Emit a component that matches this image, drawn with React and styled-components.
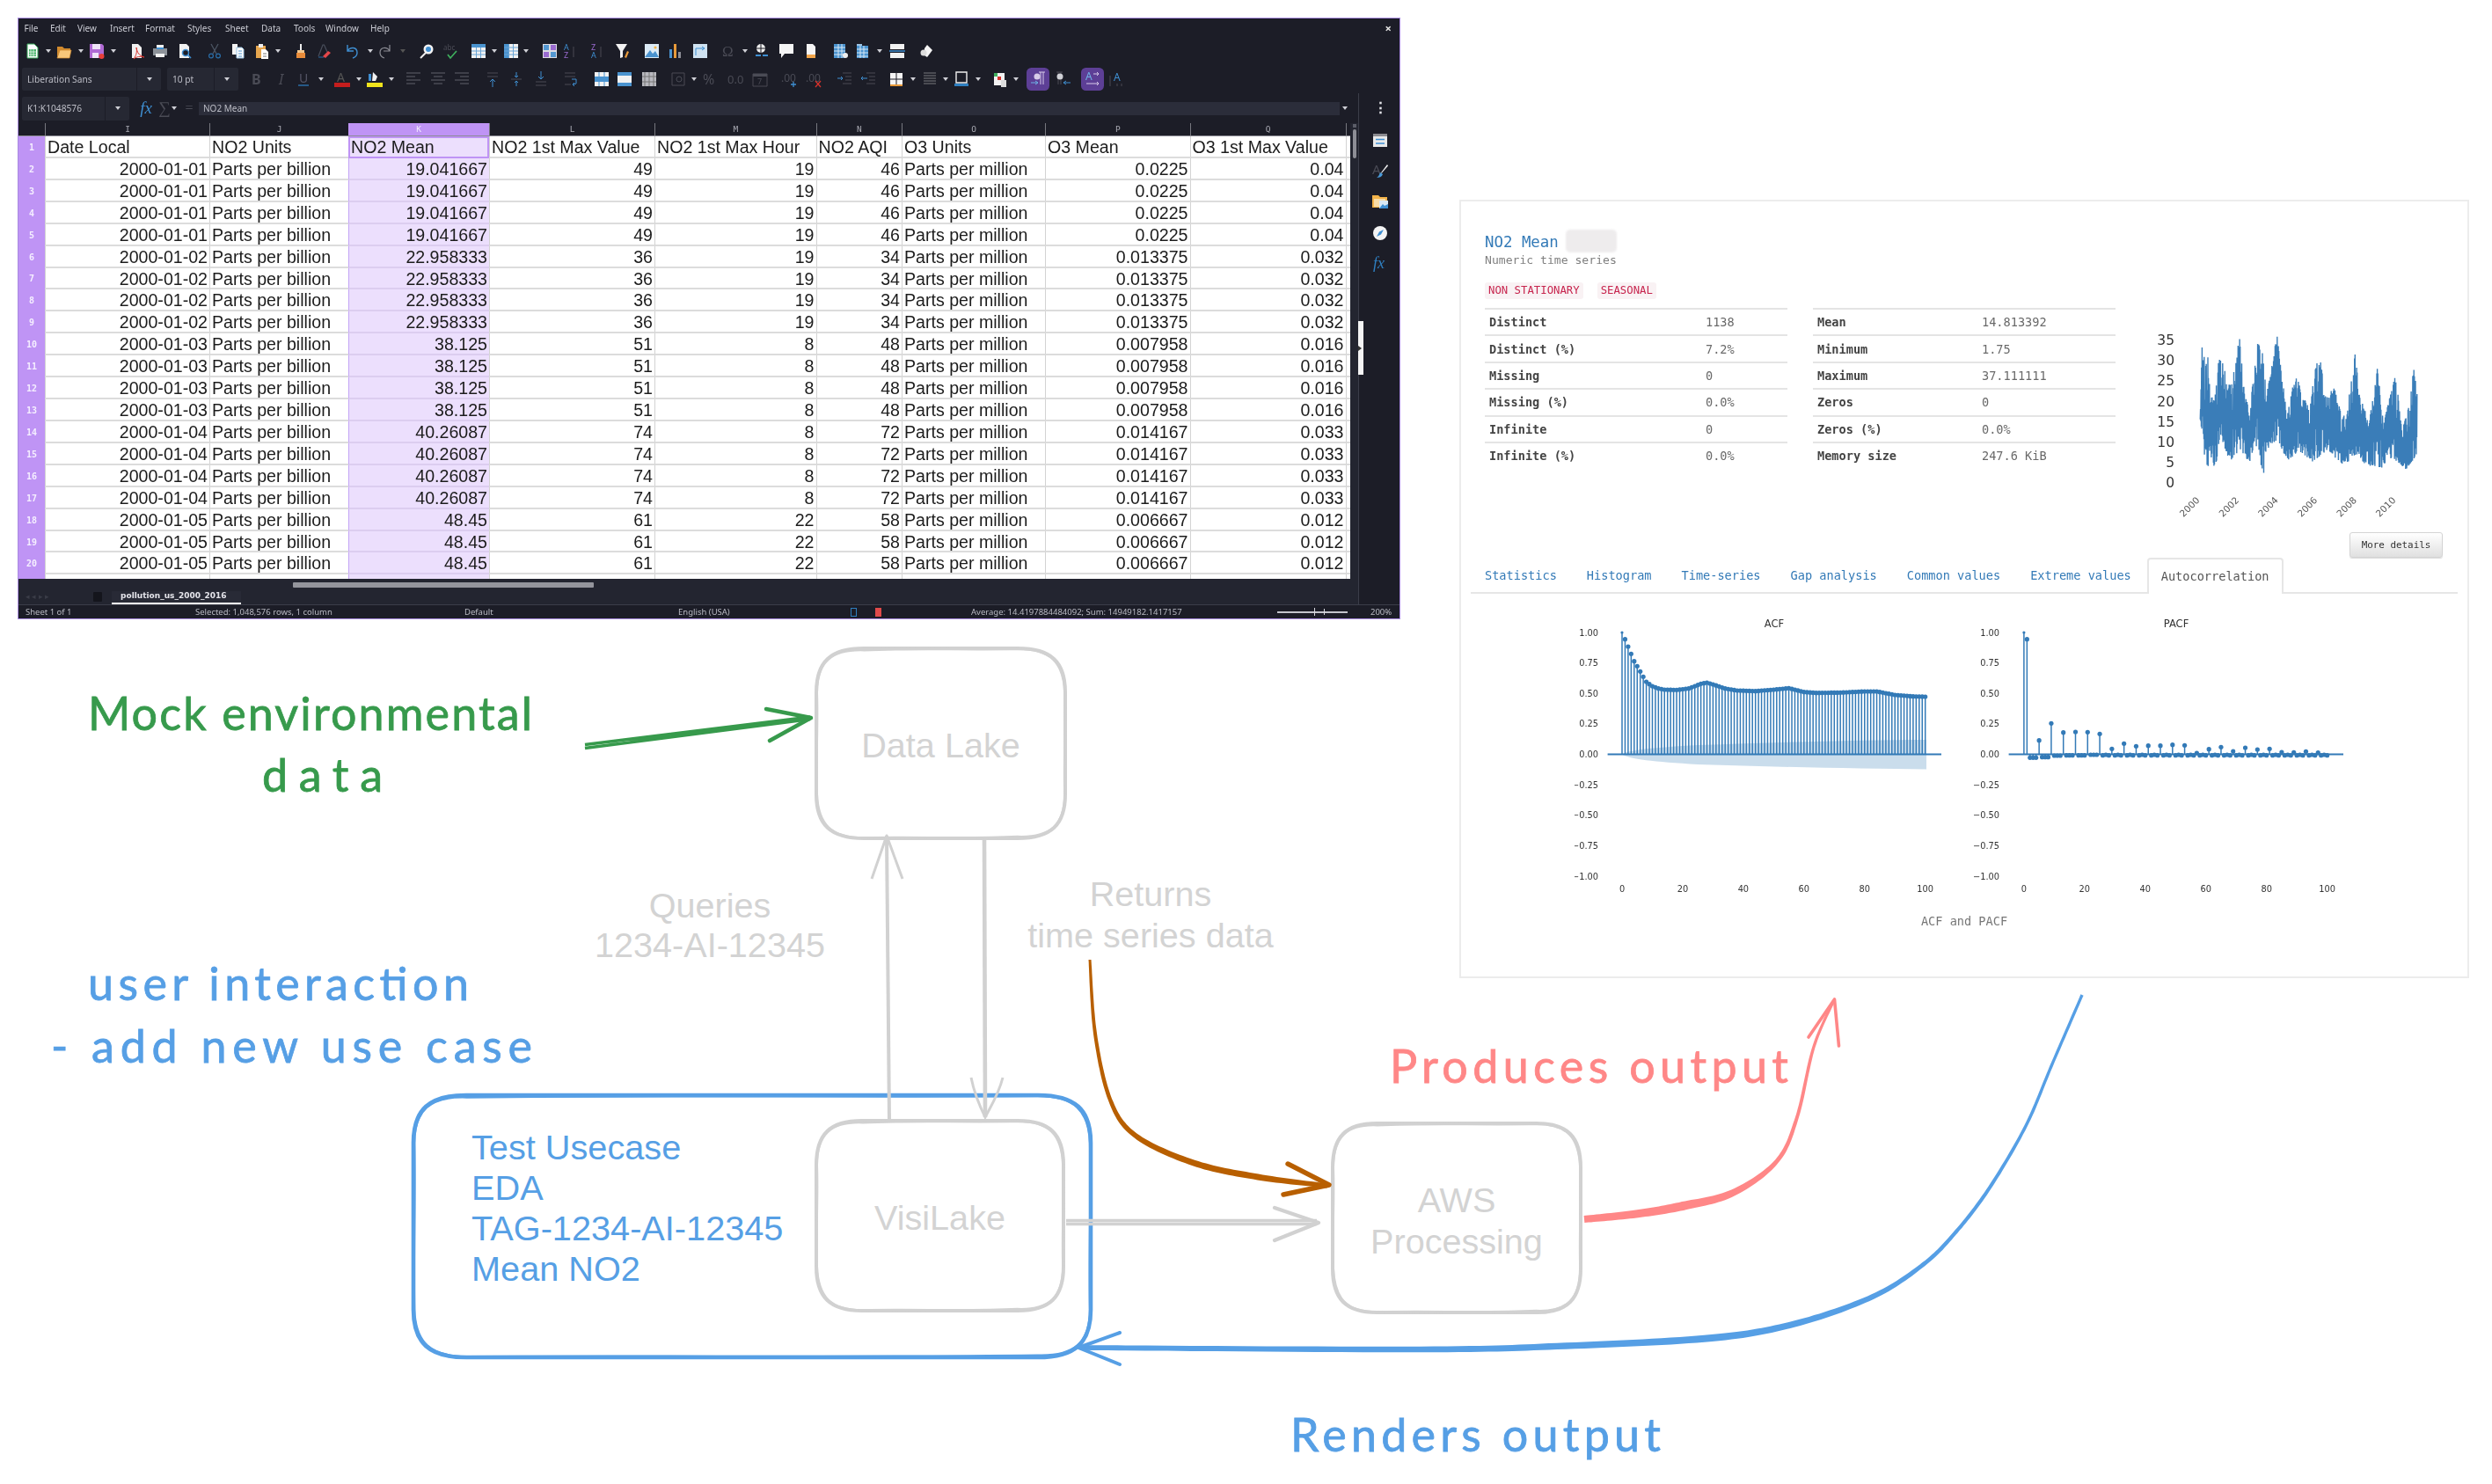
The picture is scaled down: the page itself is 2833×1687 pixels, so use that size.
import React from "react";
import styled, { createGlobalStyle } from "styled-components";

const GlobalStyle = createGlobalStyle`
  html, body { margin: 0; padding: 0; background: #fff; }
`;

const Canvas = styled.div`
  position: relative;
  width: 2833px;
  height: 1687px;
  overflow: hidden;
  background: #fff;
  font-family: "Liberation Sans", Arial, sans-serif;
`;

/* ---------- spreadsheet window ---------- */

const SheetWindow = styled.section`
  position: absolute;
  left: 20px;
  top: 20px;
  width: 1572px;
  height: 684px;
  box-sizing: border-box;
  border: 1px solid #a98be0;
  background: #1c1d27;
  display: flex;
  flex-direction: column;
  color: #c9cad2;
  font-family: "Noto Sans", sans-serif;
  filter: blur(0.3px);
`;
const MenuBar = styled.nav`
  height: 21px;
  flex: none;
  display: flex;
  align-items: center;
  padding-left: 6.5px;
  font-size: 10px;
  position: relative;
`;
const MenuItem = styled.span`
  flex: none;
  width: ${p => p.$w}px;
`;
const CloseMark = styled.span`
  position: absolute;
  right: 9px;
  top: 2px;
  font-size: 13px;
  font-weight: 700;
  color: #e6e6e6;
`;
const ToolRow = styled.div`
  flex: none;
  height: ${p => p.$h}px;
  display: flex;
  align-items: center;
`;
const Slot = styled.span`
  flex: none;
  display: flex;
  align-items: center;
  justify-content: center;
  margin-left: ${p => p.$gap}px;
  width: ${p => (p.$drop ? 6 : 18)}px;
  height: 18px;
`;
const HiSlot = styled(Slot)`
  background: #5d3f96;
  border-radius: 2px;
  box-shadow: 0 0 0 4px #5d3f96;
`;
const Arrow = styled.i`
  width: 0;
  height: 0;
  border-left: 3px solid transparent;
  border-right: 3px solid transparent;
  border-top: 4px solid ${p => (p.$dim ? "#555" : "#cfd0d6")};
`;
const Combo = styled.div`
  flex: none;
  width: ${p => p.$w}px;
  height: ${p => p.$h || 26}px;
  margin-left: ${p => p.$gap}px;
  background: #262833;
  border-radius: 2px;
  display: flex;
  align-items: center;
  font-size: 10.2px;
  color: #bcbdc6;
`;
const ComboText = styled.span`
  flex: 1;
  padding-left: 6px;
  white-space: nowrap;
`;
const ComboDrop = styled.span`
  flex: none;
  width: ${p => p.$w}px;
  height: 100%;
  border-left: 1px solid #1c1d27;
  display: flex;
  align-items: center;
  justify-content: center;
`;
const MainArea = styled.div`
  flex: none;
  height: 581px;
  display: flex;
`;
const SheetColumn = styled.div`
  flex: none;
  width: 1523px;
  display: flex;
  flex-direction: column;
`;
const FormulaRow = styled.div`
  flex: none;
  height: 34px;
  display: flex;
  align-items: center;
`;
const FxMark = styled.span`
  margin-left: ${p => p.$gap}px;
  color: ${p => p.$color};
  font-family: "Liberation Serif", serif;
  font-style: ${p => (p.$italic ? "italic" : "normal")};
  font-size: ${p => p.$size || 16}px;
  width: ${p => p.$w}px;
  text-align: center;
`;
const FormulaInput = styled.div`
  flex: none;
  width: 1297px;
  height: 15px;
  margin-left: 4px;
  background: #2b2d3a;
  font-size: 10px;
  line-height: 15px;
  padding-left: 5px;
  box-sizing: border-box;
  color: #bcbdc6;
`;
const ColumnHeads = styled.div`
  flex: none;
  height: 14px;
  display: grid;
  grid-template-columns: ${p => p.$cols};
`;
const ColumnHead = styled.div`
  font-family: "DejaVu Sans Mono", monospace;
  font-size: 9.5px;
  line-height: 14px;
  text-align: center;
  color: ${p => (p.$sel ? "#f3ecff" : "#a8a9b2")};
  background: ${p => (p.$sel ? "#bf94f5" : "transparent")};
  border-left: ${p => (p.$none ? "none" : "1px solid #77787f")};
  box-sizing: border-box;
`;
const GridWrap = styled.div`
  flex: none;
  display: flex;
`;
const GridStack = styled.div`
  flex: none;
  width: 1514px;
`;
const ScrollTrack = styled.div`
  flex: none;
  width: 9px;
  height: 518px;
  margin-top: -14px;
  background: #232530;
  padding: 1px 2px 0 3px;
  box-sizing: border-box;
`;
const ScrollCap = styled.div`
  height: 4px;
  background: #5b5d68;
`;
const ScrollThumb = styled.div`
  height: 33px;
  margin-top: 2px;
  background: #8d8e96;
  border-radius: 2px;
`;
const Table = styled.div`
  height: 504px;
  overflow: hidden;
  background: #fff;
  border-top: 1px solid #8c8c94;
  box-sizing: border-box;
`;
const Row = styled.div`
  display: grid;
  grid-template-columns: ${p => p.$cols};
  height: ${p => p.$h}px;
`;
const RowHead = styled.div`
  background: #bf94f5;
  color: #f5efff;
  font-family: "DejaVu Sans Mono", monospace;
  font-weight: 700;
  font-size: 10px;
  display: flex;
  align-items: center;
  justify-content: center;
`;
const Cell = styled.div`
  box-sizing: border-box;
  font-family: "Liberation Sans", Arial, sans-serif;
  font-size: 19.6px;
  line-height: 23px;
  color: #1c1c1c;
  padding: 1px 2px 0;
  text-align: ${p => (p.$num ? "right" : "left")};
  white-space: nowrap;
  overflow: hidden;
  background: ${p => (p.$sel ? "#ecdffd" : "#fff")};
  border-left: 1px solid ${p => (p.$sel ? "#c4a5f5" : "#d3d3d3")};
  border-bottom: 2px solid ${p => (p.$sel ? "#dccdf0" : "#dcdcdc")};
`;
const ActiveCell = styled(Cell)`
  border: 2px solid #bf94f5;
  padding: 0 0 0 1px;
  line-height: 21px;
`;
const HScroll = styled.div`
  flex: none;
  height: 14px;
  background: #232530;
  display: flex;
  align-items: center;
`;
const HThumb = styled.div`
  width: 342px;
  height: 6px;
  margin-left: 312px;
  background: #94959c;
  border-radius: 1px;
`;
const TabRow = styled.div`
  flex: none;
  height: 15px;
  background: #232530;
  display: flex;
  align-items: stretch;
`;
const TabNav = styled.span`
  width: 85px;
  font-size: 9px;
  color: #3a3c47;
  padding-left: 8px;
  box-sizing: border-box;
  line-height: 12px;
  white-space: nowrap;
`;
const AddSheet = styled.span`
  width: 10px;
  height: 11px;
  margin: 1px 11px 0 0;
  background: #14151c;
  border-radius: 1px;
`;
const SheetTab = styled.span`
  width: 147px;
  box-sizing: border-box;
  border-bottom: 2px solid #fff;
  font-family: "DejaVu Sans", sans-serif;
  font-weight: 700;
  font-size: 9px;
  line-height: 11px;
  padding-left: 10px;
  color: #e4e4ea;
  background: #282a36;
  white-space: nowrap;
`;
const Sidebar = styled.aside`
  flex: none;
  width: 47px;
  border-left: 1px solid #3b3d49;
  box-sizing: border-box;
  display: flex;
  flex-direction: column;
  align-items: center;
  padding-left: 2px;
`;
const SideDots = styled.div`
  height: 42px;
  margin-top: 2px;
  font-weight: 700;
  font-size: 17px;
  line-height: 28px;
  color: #e2e2e8;
`;
const SideIcon = styled.div`
  width: 20px;
  height: 20px;
  margin-bottom: ${p => p.$mb}px;
`;
const SideHandle = styled.div`
  position: absolute;
  left: 1523px;
  top: 344px;
  width: 6px;
  height: 61px;
  background: #f4f4f4;
  display: flex;
  align-items: center;
`;
const HandleMark = styled.i`
  width: 0;
  height: 0;
  border-top: 3px solid transparent;
  border-bottom: 3px solid transparent;
  border-left: 4px solid #333;
`;
const StatusBar = styled.footer`
  flex: none;
  height: 16px;
  border-top: 1px solid #3b3d49;
  box-sizing: border-box;
  display: flex;
  align-items: center;
  font-size: 9.5px;
  color: #b9bac3;
  position: relative;
`;
const StatusText = styled.span`
  position: absolute;
  left: ${p => p.$x}px;
  white-space: nowrap;
`;
const StatusMark = styled.span`
  position: absolute;
  left: ${p => p.$x}px;
  width: 5px;
  height: 8px;
  border: 1px solid ${p => p.$color};
  background: ${p => p.$fill};
`;
const ZoomTrack = styled.span`
  position: absolute;
  left: 1431px;
  width: 80px;
  height: 2px;
  background: #c4c5cc;
`;
const ZoomKnob = styled.span`
  position: absolute;
  left: ${p => p.$x}px;
  top: ${p => p.$top}px;
  width: 1px;
  height: ${p => p.$h}px;
  background: #d8d8de;
`;
const IconSvg = styled.svg`
  display: block;
  overflow: visible;
`;

/* ---------- profiling report panel ---------- */

const Report = styled.section`
  position: absolute;
  left: 1659px;
  top: 227px;
  width: 1148px;
  height: 885px;
  box-sizing: border-box;
  border: 2px solid #ececec;
  background: #fff;
  padding: 33px 11px 0 11px;
  font-family: "DejaVu Sans Mono", "Liberation Mono", monospace;
  font-size: 13.6px;
  color: #333;
  filter: blur(0.25px);
`;
const Overview = styled.div`
  display: flex;
  height: 343px;
`;
const Facts = styled.div`
  flex: none;
  width: 749px;
  padding-left: 16px;
  box-sizing: border-box;
`;
const TitleLine = styled.div`
  height: 25px;
  display: flex;
  align-items: center;
`;
const VarName = styled.span`
  font-size: 17.4px;
  color: #337ab7;
`;
const Redaction = styled.span`
  width: 58px;
  height: 26px;
  margin-left: 8px;
  margin-top: -2px;
  border-radius: 5px;
  background: #eeeced;
  filter: blur(1px);
`;
const VarType = styled.div`
  font-size: 13.1px;
  line-height: 18px;
  color: #808080;
`;
const Badges = styled.div`
  display: flex;
  gap: 16px;
  margin-top: 16px;
`;
const Badge = styled.code`
  font-family: inherit;
  font-size: 12.3px;
  line-height: 19px;
  padding: 0 4px;
  background: #f9f2f4;
  color: #c7254e;
  border-radius: 3px;
`;
const FactTables = styled.div`
  display: flex;
  gap: 29px;
  margin-top: 10px;
`;
const FactTable = styled.div`
  width: ${p => p.$w}px;
`;
const FactRow = styled.div`
  display: grid;
  grid-template-columns: ${p => p.$label}px 1fr;
  height: 30.4px;
  box-sizing: border-box;
  align-items: center;
  padding-left: 5px;
  border-top: 2px solid #e4e4e4;
`;
const FactLabel = styled.span`
  font-weight: 700;
  color: #444;
`;
const FactValue = styled.span`
  color: #6a6a6a;
`;
const TrendBox = styled.svg`
  flex: none;
  margin: 103px 0 0 20px;
  display: block;
`;
const ActionRow = styled.div`
  display: flex;
  justify-content: flex-end;
  padding-right: 17px;
  height: 29px;
`;
const MoreButton = styled.button`
  width: 106px;
  height: 29px;
  padding: 0;
  font-family: inherit;
  font-size: 10.9px;
  color: #333;
  border: 1px solid #d4d4d4;
  border-radius: 3px;
  background: linear-gradient(#fff, #e0e0e0);
  box-shadow: 0 1px 1px rgba(0, 0, 0, 0.15);
`;
const Tabs = styled.ul`
  list-style: none;
  margin: 0;
  padding: 0;
  height: 41px;
  box-sizing: border-box;
  display: flex;
  border-bottom: 2px solid #e6e6e6;
`;
const Tab = styled.li`
  box-sizing: border-box;
  height: ${p => (p.$active ? 41 : 39)}px;
  padding: 0 15px;
  margin-right: 2px;
  line-height: 38px;
  border: 1px solid transparent;
  color: #337ab7;
  ${p => p.$active && `
    color: #555;
    background: #fff;
    border: 2px solid #e6e6e6;
    border-bottom: 0;
    border-radius: 4px 4px 0 0;
    padding: 0 14px;
  `}
`;
const AcfBox = styled.svg`
  display: block;
  margin-left: 118px;
  margin-top: 20px;
`;
const Caption = styled.div`
  text-align: center;
  margin-top: 14px;
  color: #777;
`;

/* ---------- sketched diagram ---------- */

const Wires = styled.svg`
  position: absolute;
  left: 0;
  top: 0;
`;
const Scrawl = styled.text`
  font-family: Lato, "Noto Sans", sans-serif;
  font-size: 52px;
  fill: ${p => p.$color};
  stroke: ${p => p.$color};
  stroke-width: 0.8px;
`;
const BoxLabel = styled.div`
  position: absolute;
  left: ${p => p.$x}px;
  top: ${p => p.$y}px;
  width: ${p => p.$w}px;
  text-align: center;
  font-size: 39.6px;
  line-height: ${p => p.$lh || 46}px;
  color: #d3d3d3;
  white-space: nowrap;
`;
const UseCase = styled.div`
  position: absolute;
  left: 536px;
  top: 1281px;
  font-size: 39.7px;
  line-height: 46px;
  color: #569fe5;
  white-space: nowrap;
`;

/* ---------- icons ---------- */

const D = "#4a4b55";
const ICONS = {
  calc: <><path d="M3 1h8l4 4v12H3z" fill="#fff" stroke="#39a85a" /><path d="M5 7h8v8H5z" fill="#46b468" /><path d="M7 7v8M10 7v8M5 10h8M5 13h8" stroke="#fff" strokeWidth=".7" /></>,
  folder: <><path d="M1 4h6l2 2h7v2H5L1 16z" fill="#d18a2e" /><path d="M4 8h13l-2 9H1z" fill="#f7c77a" stroke="#d18a2e" strokeWidth=".7" /></>,
  save: <><path d="M1 1h14l2 2v14H1z" fill="#b06ad4" /><path d="M4 1h9v6H4z" fill="#efe3f7" /><path d="M4 11h7v6H4z" fill="#efe3f7" /><circle cx="14.5" cy="15" r="3" fill="#e8403a" /></>,
  pdf: <><path d="M3 1h7l4 4v12H3z" fill="#f1f1f1" /><path d="M8 5c1 6 3 9 9 11-5-1-8-1-12 2 3-4 4-8 3-13z" fill="none" stroke="#d6322c" /></>,
  print: <><path d="M5 2h8v5H5z" fill="#f2f2f2" /><path d="M1 6h16v8H1z" fill="#8d9299" /><path d="M5 5h8v2H5z" fill="#3f8fd2" /><path d="M4 12h10v4H4z" fill="#f2f2f2" /></>,
  preview: <><path d="M3 1h8l3 3v13H3z" fill="#f1f1f1" /><circle cx="10" cy="11" r="3.5" fill="#1c1d27" stroke="#3f8fd2" strokeWidth="1.5" /><path d="M12.5 13.5L16 17" stroke="#3f8fd2" strokeWidth="1.6" /></>,
  cut: <><path d="M5 1l6 11M13 1L7 12" stroke="#4b5563" strokeWidth="1.3" /><circle cx="5" cy="14.5" r="2.4" fill="none" stroke="#2a6ea8" strokeWidth="1.2" /><circle cx="13" cy="14.5" r="2.4" fill="none" stroke="#2a6ea8" strokeWidth="1.2" /></>,
  copy: <><path d="M3 1h6v12H3z" fill="#f3f3f3" /><path d="M8 5h6l2 2v10H8z" fill="#fff" stroke="#9cc4e4" /><path d="M10 9h4M10 12h4M10 15h4" stroke="#4a93cf" /></>,
  paste: <><path d="M2 3h11v14H2z" fill="#e6a64e" /><path d="M5 1h5v4H5z" fill="#eee" /><path d="M8 7h5l3 3v8H8z" fill="#fff" /><path d="M10 12h4M10 15h4" stroke="#777" /></>,
  brush: <><path d="M8 1h2v7H8z" fill="#eee" /><path d="M5 8h8v3H5z" fill="#f2c78e" /><path d="M4 11h10v6H4z" fill="#e98c3a" /></>,
  erase: <><path d="M3 15l5-13h1.5L13 10" fill="none" stroke="#4a4f5c" strokeWidth="1.2" /><path d="M3 16h6" stroke="#2a6ea8" /><path d="M8 15l6-6 3 2-6 6z" fill="#e4474a" /></>,
  undo: <path d="M4 2v7h7M4 9c3-5 11-5 11 2 0 3-2 5-5 6" fill="none" stroke="#3f8fd2" strokeWidth="1.4" />,
  redo: <path d="M14 2v7H7M14 9C11 4 3 4 3 11c0 3 2 5 5 6" fill="none" stroke="#8d8e96" strokeWidth="1.2" />,
  find: <><path d="M8 11L2 17" stroke="#eee" strokeWidth="2" /><circle cx="11" cy="7" r="5.5" fill="#f3f3f3" /><circle cx="11" cy="7" r="3" fill="#3f8fd2" /></>,
  spell: <><text x="1" y="8" fontSize="8" fill={D} fontFamily="Noto Sans">abc</text><path d="M6 13l3 4 7-8" fill="none" stroke="#3fb05e" strokeWidth="1.7" /></>,
  grid: <><path d="M1 1h16v16H1z" fill="#f2f2f2" /><path d="M1 1h16v4H1z" fill="#4a93cf" /><path d="M1 9h16M1 13h16M6.5 5v12M11.5 5v12" stroke="#6aa5d6" /></>,
  gridB: <><path d="M1 1h16v16H1z" fill="#f2f2f2" /><path d="M1 1h5v16H1z" fill="#4a93cf" /><path d="M1 5h16M1 9h16M1 13h16M6.5 1v16M11.5 1v16" stroke="#6aa5d6" /></>,
  sort: <><path d="M1 1h16v16H1z" fill="#dcdce2" /><path d="M2 2h6v6H2zM10 10h6v6h-6z" fill="#5397d1" /><path d="M10 2h6v6h-6zM2 10h6v6H2z" fill="#9a6bd0" /></>,
  az: <><text x="2" y="8" fontSize="9" fill="#3f8fd2" fontFamily="Noto Sans">A</text><text x="2" y="17" fontSize="9" fill="#9a6bd0" fontFamily="Noto Sans">Z</text><path d="M13 4v12" stroke={D} /></>,
  za: <><text x="2" y="8" fontSize="9" fill="#9a6bd0" fontFamily="Noto Sans">Z</text><text x="2" y="17" fontSize="9" fill="#3f8fd2" fontFamily="Noto Sans">A</text><path d="M13 4v12" stroke={D} /></>,
  filter: <><path d="M1 1h13L9 9v7L6 17V9z" fill="#f3f3f3" /><path d="M11 16l3-7 2 1-3 7z" fill="#e89a3a" /></>,
  image: <><path d="M1 1h16v16H1z" fill="#dcebf6" /><path d="M1 16l6-8 3 4 3-3 4 7z" fill="#4a93cf" /><circle cx="13" cy="5" r="1.6" fill="#f2b34a" /></>,
  chart: <><path d="M2 7h3v10H2z" fill="#4a93cf" /><path d="M7 1h3v16H7z" fill="#e89a3a" /><path d="M12 10h3v7h-3z" fill="#8d8e96" /></>,
  pivot: <><path d="M1 1h16v16H1z" fill="#cfe2f1" /><path d="M4 14V6h10M14 6l-3-2M14 6l-3 2" fill="none" stroke="#3f8fd2" /></>,
  omega: <text x="1" y="15" fontSize="17" fill={D} fontFamily="Liberation Serif">Ω</text>,
  link: <><circle cx="8" cy="6" r="5" fill="#eee" /><path d="M3 6h10M8 1v10" stroke="#1c1d27" /><path d="M2 14h6M10 14h6" stroke="#3f8fd2" strokeWidth="2" /></>,
  comment: <path d="M1 1h16v11H7l-4 5v-5H1z" fill="#f5f5f5" />,
  note: <><path d="M4 1h7l3 3v13H4z" fill="#f5f5f5" /><path d="M4 13h10v4H4z" fill="#f2a54a" /></>,
  hdrA: <><path d="M1 1h13v16H1z" fill="#4a93cf" /><path d="M1 5h13M1 9h13M1 13h13M6 1v16M10 1v16" stroke="#d6e7f4" /><circle cx="14" cy="14" r="3" fill="#eee" /></>,
  hdrB: <><path d="M2 3h13v14H2z" fill="#4a93cf" /><path d="M2 7h13M2 11h13M2 15h13M6 3v14M10 3v14" stroke="#d6e7f4" /><path d="M2 1h6v2H2z" fill="#9cc4e4" /></>,
  split: <><path d="M1 1h16v6H1zM1 11h16v6H1z" fill="#f2f2f2" /><path d="M0 9h18" stroke="#3f8fd2" strokeWidth="1.5" /></>,
  shapes: <><path d="M9 2l6 6-6 8-3-2V6z" fill="#f5f5f5" /><circle cx="5" cy="11" r="3.5" fill="#ddd" /></>,
  bold: <text x="3" y="15" fontSize="16" fontWeight="700" fill={D} fontFamily="Noto Sans">B</text>,
  ital: <text x="6" y="15" fontSize="16" fontStyle="italic" fill={D} fontFamily="Noto Sans">I</text>,
  under: <><text x="3" y="13" fontSize="14" fill="#556" fontFamily="Noto Sans">U</text><path d="M2 16h12" stroke="#2a6ea8" strokeWidth="1.5" /></>,
  color: <><text x="3" y="12" fontSize="14" fill="#555" fontFamily="Noto Sans">A</text><path d="M0 13h18v5H0z" fill="#c41d1d" /></>,
  high: <><path d="M7 1l5 5-2 5H6z" fill="#f2f2f2" /><path d="M2 3h3v8H2z" fill="#3f8fd2" /><path d="M0 13h18v5H0z" fill="#efe31c" /></>,
  alignL: <path d="M1 2h16M1 6h10M1 10h16M1 14h10" stroke={D} strokeWidth="1.3" />,
  alignC: <path d="M1 2h16M4 6h10M1 10h16M4 14h10" stroke={D} strokeWidth="1.3" />,
  alignR: <path d="M1 2h16M7 6h10M1 10h16M7 14h10" stroke={D} strokeWidth="1.3" />,
  valT: <><path d="M3 2h12M3 6h12" stroke={D} /><path d="M9 18V9M6 12l3-3 3 3" fill="none" stroke="#3f8fd2" /></>,
  valM: <><path d="M3 9h12" stroke={D} /><path d="M9 1v6M7 5l2 2 2-2M9 17v-6M7 13l2-2 2 2" fill="none" stroke="#3f8fd2" /></>,
  valB: <><path d="M3 12h12M3 16h12" stroke={D} /><path d="M9 0v9M6 6l3 3 3-3" fill="none" stroke="#3f8fd2" /></>,
  wrap: <><path d="M2 2h12M2 6h12M2 15h7" stroke={D} /><path d="M10 9h5v5l-3 1M13 13l-2 2 2 2" fill="none" stroke="#3f8fd2" /></>,
  merge: <><path d="M1 1h16v16H1z" fill="#f2f2f2" /><path d="M1 6h16v6H1z" fill="#4a93cf" /><path d="M6 1v5M12 1v5M6 12v5M12 12v5" stroke="#4a93cf" /></>,
  mergeB: <><path d="M1 1h16v16H1z" fill="#f2f2f2" /><path d="M1 1h16v4H1zM1 13h16v4H1z" fill="#4a93cf" /></>,
  mergeC: <><path d="M1 1h16v16H1z" fill="#b9b9bf" /><path d="M4 1v16M9 1v16M14 1v16M1 6h16M1 12h16" stroke="#777" /></>,
  cond: <><path d="M1 2h14v14H1z" fill="none" stroke={D} /><circle cx="9" cy="9" r="3" fill="none" stroke={D} /></>,
  pct: <text x="0" y="15" fontSize="16" fill={D} fontFamily="Noto Sans">%</text>,
  num: <text x="0" y="14" fontSize="13" fill={D} fontFamily="Noto Sans">0.0</text>,
  cal: <><path d="M1 3h16v14H1z" fill="none" stroke={D} /><path d="M1 3h16v3H1z" fill={D} /><text x="6" y="15" fontSize="9" fill={D}>7</text></>,
  decAdd: <><text x="0" y="12" fontSize="12" fill={D} fontFamily="Noto Sans">.00</text><path d="M11 15h6M14 12v6" stroke="#3f8fd2" strokeWidth="1.3" /></>,
  decDel: <><text x="0" y="12" fontSize="12" fill={D} fontFamily="Noto Sans">.00</text><path d="M11 11l6 7M17 11l-6 7" stroke="#d6322c" strokeWidth="1.3" /></>,
  indent: <><path d="M7 2h10M10 6h7M10 10h7M7 14h10" stroke={D} /><path d="M1 8h6M5 6l2 2-2 2" fill="none" stroke="#3f8fd2" /></>,
  outdent: <><path d="M7 2h10M10 6h7M10 10h7M7 14h10" stroke={D} /><path d="M8 8H1M3 6L1 8l2 2" fill="none" stroke="#3f8fd2" /></>,
  cellB: <><path d="M2 2h14v14H2z" fill="#f5f5f5" /><path d="M2 9h14M9 2v14" stroke="#1c1d27" /><path d="M2 15h14v2H2z" fill="#e89a3a" /></>,
  lines: <path d="M2 2h14M2 5h14M2 8h14M2 11h14M2 14h14" stroke="#5a5b62" strokeWidth="1.4" />,
  frame: <><path d="M3 1h12v12H3z" fill="none" stroke="#eee" strokeWidth="1.4" /><path d="M1 14h16v3H1z" fill="#2f7fc0" /></>,
  style: <><path d="M2 2h12v14H2z" fill="#f2f2f2" /><path d="M2 2h4v4H2z" fill="#3fb05e" /><path d="M6 6h4v4H6z" fill="#d6322c" /><path d="M10 10h6v8h-6z" fill="#ddd" /></>,
  paraL: <><path d="M10 1h7M12 1v14M15 1v14" stroke="#d8cbe9" /><circle cx="8" cy="6" r="3.5" fill="#d8cbe9" /><path d="M1 13h8M6 11l3 2-3 2" fill="none" stroke="#6fb2e6" /></>,
  paraR: <><path d="M1 1h7M3 1v14M6 1v14" stroke={D} /><circle cx="5" cy="6" r="3.5" fill="#cfd0d6" /><path d="M17 13H9M12 11l-3 2 3 2" fill="none" stroke="#3f8fd2" /></>,
  textH: <><text x="1" y="10" fontSize="12" fill="#6fb2e6" fontFamily="Noto Sans">A</text><path d="M10 3h6M14 1l2 2-2 2M2 14h14M14 12l2 2-2 2" fill="none" stroke="#d8cbe9" /></>,
  textV: <><text x="6" y="11" fontSize="12" fill="#3f8fd2" fontFamily="Noto Sans">A</text><path d="M2 5v12M10 14v3M15 14v3" stroke={D} /></>,
  props: <><path d="M2 2h16v15H2z" fill="#e9e9e9" /><path d="M2 2h16v3H2z" fill="#8a8a90" /><path d="M5 8.5h10M5 13h10" stroke="#3f8fd2" strokeWidth="1.5" /></>,
  styles: <><text x="1" y="14" fontSize="15" fill={D} fontFamily="Noto Sans">A</text><path d="M18 3l1 1.5-7 8-1.5.5z" fill="#f0f0f0" /><path d="M10 12l3 2c-1 3-4 4-7 4 2-1 3-3 4-6z" fill="#4a9ad8" /></>,
  gallery: <><path d="M1 3h7l2 2h8v12H1z" fill="#f2b34a" /><path d="M3 7h13v9H3z" fill="#f7dca8" /><path d="M9 9h10v9H9z" fill="#d9e8f4" /><path d="M9 18l4-5 2 2 4-2v5z" fill="#3f8fd2" /></>,
  nav: <><circle cx="10" cy="10" r="8" fill="#f4f4f4" /><path d="M14 6l-5 2.5L6 14l5-2.5z" fill="#3f8fd2" /></>,
  fx: <text x="2" y="16" fontSize="18" fontStyle="italic" fill="#2f7fc0" fontFamily="Liberation Serif">fx</text>,
};

const Icon = ({ k, size = 18 }) => (
  <IconSvg width={size} height={size} viewBox={size === 20 ? "0 0 20 20" : "0 0 18 18"}>
    {ICONS[k]}
  </IconSvg>
);

const BAR_ONE = [
  [37, "calc"], [55, "drop"], [73, "folder"], [92, "drop"], [110, "save"], [129, "drop"],
  [156, "pdf"], [182, "print"], [210, "preview"], [244, "cut"], [270, "copy"], [298, "paste"],
  [316, "drop"], [342, "brush"], [368, "erase"], [400, "undo"], [421, "drop"], [438, "redo"],
  [458, "dimdrop"], [485, "find"], [512, "spell"], [544, "grid"], [562, "drop"], [581, "gridB"],
  [598, "drop"], [625, "sort"], [648, "az"], [679, "za"], [708, "filter"], [741, "image"],
  [768, "chart"], [796, "pivot"], [829, "omega"], [847, "drop"], [866, "link"], [894, "comment"],
  [922, "note"], [956, "hdrA"], [981, "hdrB"], [1000, "drop"], [1020, "split"], [1054, "shapes"],
];

const BAR_TWO = [
  [292, "bold"], [320, "ital"], [346, "under"], [365, "drop"], [389, "color"], [408, "drop"],
  [426, "high"], [445, "drop"], [470, "alignL"], [498, "alignC"], [525, "alignR"], [560, "valT"],
  [587, "valM"], [615, "valB"], [649, "wrap"], [684, "merge"], [710, "mergeB"], [738, "mergeC"],
  [772, "cond"], [789, "drop"], [808, "pct"], [836, "num"], [864, "cal"], [897, "decAdd"],
  [925, "decDel"], [960, "indent"], [987, "outdent"], [1019, "cellB"], [1038, "drop"], [1057, "lines"],
  [1075, "drop"], [1093, "frame"], [1112, "drop"], [1137, "style"], [1155, "drop"], [1180, "paraL", true],
  [1209, "paraR"], [1242, "textH", true], [1269, "textV"],
];

const Tools = ({ items, from }) => {
  let prev = from;
  return items.map(([x, k, hi]) => {
    const drop = k === "drop" || k === "dimdrop";
    const w = drop ? 6 : 18;
    const gap = Math.round(x - w / 2 - prev);
    prev = x + w / 2;
    const Item = hi ? HiSlot : Slot;
    return (
      <Item key={x} $gap={gap} $drop={drop}>
        {drop ? <Arrow $dim={k === "dimdrop"} /> : <Icon k={k} />}
      </Item>
    );
  });
};

/* ---------- sheet data ---------- */

const COLS = "30px 187px 158px 160px 188px 183.5px 97.5px 163px 164.5px 177px 5.5px";
const LETTERS = ["", "I", "J", "K", "L", "M", "N", "O", "P", "Q", ""];
const HEADINGS = ["Date Local", "NO2 Units", "NO2 Mean", "NO2 1st Max Value", "NO2 1st Max Hour", "NO2 AQI", "O3 Units", "O3 Mean", "O3 1st Max Value"];
const GROUPS = [
  ["2000-01-01", "19.041667", "49", "19", "46", "0.0225", "0.04", 4],
  ["2000-01-02", "22.958333", "36", "19", "34", "0.013375", "0.032", 4],
  ["2000-01-03", "38.125", "51", "8", "48", "0.007958", "0.016", 4],
  ["2000-01-04", "40.26087", "74", "8", "72", "0.014167", "0.033", 4],
  ["2000-01-05", "48.45", "61", "22", "58", "0.006667", "0.012", 3],
];
const ROWS = GROUPS.flatMap(g => Array.from({ length: g[7] }, () => g));

const MENU = [["File", 29.5], ["Edit", 31], ["View", 37], ["Insert", 40], ["Format", 48], ["Styles", 43], ["Sheet", 41], ["Data", 37], ["Tools", 36], ["Window", 51], ["Help", 30]];

const Spreadsheet = () => (
  <SheetWindow>
    <MenuBar>
      {MENU.map(([name, w]) => (
        <MenuItem key={name} $w={w}>{name}</MenuItem>
      ))}
      <CloseMark>×</CloseMark>
    </MenuBar>
    <ToolRow $h={31}>
      <Tools items={BAR_ONE} from={21} />
    </ToolRow>
    <ToolRow $h={33}>
      <Combo $w={158} $gap={4}>
        <ComboText>Liberation Sans</ComboText>
        <ComboDrop $w={27}><Arrow /></ComboDrop>
      </Combo>
      <Combo $w={81} $gap={7}>
        <ComboText>10 pt</ComboText>
        <ComboDrop $w={27}><Arrow /></ComboDrop>
      </Combo>
      <Tools items={BAR_TWO} from={271} />
    </ToolRow>
    <MainArea>
      <SheetColumn>
        <FormulaRow>
          <Combo $w={122} $h={27} $gap={4}>
            <ComboText>K1:K1048576</ComboText>
            <ComboDrop $w={27}><Arrow /></ComboDrop>
          </Combo>
          <FxMark $gap={9} $w={20} $color="#3f8fd2" $italic $size={19}>fx</FxMark>
          <FxMark $gap={3} $w={16} $color={D} $size={19}>∑</FxMark>
          <Arrow />
          <FxMark $gap={7} $w={14} $color={D}>=</FxMark>
          <FormulaInput>NO2 Mean</FormulaInput>
          <Slot $gap={3} $drop><Arrow /></Slot>
        </FormulaRow>
        <ColumnHeads $cols={`${COLS} 9px`}>
          {LETTERS.map((l, i) => (
            <ColumnHead key={i} $sel={l === "K"} $none={i === 0 || l === "K"}>{l}</ColumnHead>
          ))}
        </ColumnHeads>
        <GridWrap>
          <GridStack>
            <Table>
              <Row $cols={COLS} $h={24.9}>
                <RowHead>1</RowHead>
                {HEADINGS.map((h, i) =>
                  i === 2 ? <ActiveCell key={h} $sel>{h}</ActiveCell> : <Cell key={h}>{h}</Cell>
                )}
                <Cell />
              </Row>
              {ROWS.map((r, i) => (
                <Row key={i} $cols={COLS} $h={24.93}>
                  <RowHead>{i + 2}</RowHead>
                  <Cell $num>{r[0]}</Cell>
                  <Cell>Parts per billion</Cell>
                  <Cell $num $sel>{r[1]}</Cell>
                  <Cell $num>{r[2]}</Cell>
                  <Cell $num>{r[3]}</Cell>
                  <Cell $num>{r[4]}</Cell>
                  <Cell>Parts per million</Cell>
                  <Cell $num>{r[5]}</Cell>
                  <Cell $num>{r[6]}</Cell>
                  <Cell />
                </Row>
              ))}
              <Row $cols={COLS} $h={24.93}>
                <RowHead />
                {Array.from({ length: 10 }, (_, i) => <Cell key={i} $sel={i === 2} />)}
              </Row>
            </Table>
          </GridStack>
          <ScrollTrack><ScrollCap /><ScrollThumb /></ScrollTrack>
        </GridWrap>
        <HScroll><HThumb /></HScroll>
        <TabRow>
          <TabNav>◂ ◂ ▸ ▸</TabNav>
          <AddSheet />
          <SheetTab>pollution_us_2000_2016</SheetTab>
        </TabRow>
      </SheetColumn>
      <Sidebar>
        <SideDots>⋮</SideDots>
        <SideIcon $mb={14}><Icon k="props" size={20} /></SideIcon>
        <SideIcon $mb={15}><Icon k="styles" size={20} /></SideIcon>
        <SideIcon $mb={16}><Icon k="gallery" size={20} /></SideIcon>
        <SideIcon $mb={14}><Icon k="nav" size={20} /></SideIcon>
        <SideIcon $mb={0}><Icon k="fx" size={20} /></SideIcon>
      </Sidebar>
      <SideHandle><HandleMark /></SideHandle>
    </MainArea>
    <StatusBar>
      <StatusText $x={8}>Sheet 1 of 1</StatusText>
      <StatusText $x={201}>Selected: 1,048,576 rows, 1 column</StatusText>
      <StatusText $x={507}>Default</StatusText>
      <StatusText $x={750}>English (USA)</StatusText>
      <StatusMark $x={946} $color="#2f7fc0" $fill="transparent" />
      <StatusMark $x={974} $color="#e04a4a" $fill="#e04a4a" />
      <StatusText $x={1083}>Average: 14.4197884484092; Sum: 14949182.1417157</StatusText>
      <ZoomTrack />
      <ZoomKnob $x={1473} $top={3} $h={9} />
      <ZoomKnob $x={1484} $top={4} $h={7} />
      <StatusText $x={1537}>200%</StatusText>
    </StatusBar>
  </SheetWindow>
);

/* ---------- report charts ---------- */

const seeded = seed => () => {
  seed = (seed * 1664525 + 1013904223) >>> 0;
  return seed / 4294967296;
};
const lerpAt = (pts, x) => {
  for (let i = 1; i < pts.length; i++) {
    if (x <= pts[i][0]) {
      const [x0, y0] = pts[i - 1];
      const [x1, y1] = pts[i];
      return y0 + ((y1 - y0) * (x - x0)) / (x1 - x0 || 1);
    }
  }
  return pts[pts.length - 1][1];
};

const TOP = [[1130,770],[1133,505],[1138,590],[1141,540],[1146,690],[1152,700],[1158,555],[1165,580],[1172,660],[1180,620],[1191,465],[1197,690],[1205,730],[1216,505],[1224,540],[1230,680],[1236,620],[1246,480],[1252,600],[1262,750],[1275,598],[1283,680],[1295,735],[1305,578],[1312,575],[1320,700],[1332,655],[1345,770],[1353,720],[1364,545],[1372,700],[1385,770],[1398,592],[1407,785],[1425,612],[1436,800],[1446,720],[1453,588],[1458,690]];
const BOTTOM = [[1130,770],[1135,880],[1141,935],[1147,900],[1153,945],[1160,820],[1175,920],[1190,870],[1205,920],[1212,850],[1226,960],[1235,850],[1250,860],[1262,910],[1280,880],[1300,915],[1320,880],[1345,925],[1365,900],[1385,930],[1405,935],[1420,900],[1441,940],[1455,900],[1458,880]];

const trendPath = () => {
  const rnd = seeded(42);
  const parts = [];
  for (let zx = 1130, i = 0; zx <= 1458; zx += 0.4, i++) {
    const top = lerpAt(TOP, zx);
    const bot = lerpAt(BOTTOM, zx);
    const mid = (top + bot) / 2;
    const r = rnd();
    const yz = i % 2 ? top + (mid - top) * r * r * 0.95 : bot - (bot - mid) * r * r * 0.8;
    parts.push(`${(1650 + zx / 1.329).toFixed(1)} ${(220 + yz / 3).toFixed(1)}`);
  }
  return "M" + parts.join("L");
};

const TrendChart = () => (
  <TrendBox width="340" height="240" viewBox="2440 365 340 240">
    {[35, 30, 25, 20, 15, 10, 5, 0].map((v, i) => (
      <text key={v} x="2471" y={392 + i * 23.2} textAnchor="end" fontFamily="DejaVu Sans" fontSize="15.5" fill="#333">{v}</text>
    ))}
    <path d={trendPath()} fill="none" stroke="#3a7db8" strokeWidth="1.4" />
    {[2000, 2002, 2004, 2006, 2008, 2010].map((v, i) => {
      const x = 2488 + i * 44.6;
      return (
        <text key={v} x={x} y="580" textAnchor="middle" fontFamily="DejaVu Sans" fontSize="10.5" fill="#555" transform={`rotate(-45 ${x} 576)`}>{v}</text>
      );
    })}
  </TrendBox>
);

const ACF_Z = [[0,297],[1,320],[2,345],[3,370],[4,395],[5,412],[6,430],[7,448],[8,465],[9,473],[10,480],[12,488],[14,492],[18,493],[22,488],[26,472],[28,468],[30,474],[34,488],[38,495],[44,497],[50,492],[55,487],[60,500],[64,503],[72,502],[80,498],[84,498],[90,510],[96,515],[100,516]];
const PACF_Z = { 0:297,1:320,2:724,3:724,4:724,5:665,6:722,7:722,8:722,9:607,10:717,11:717,12:717,13:638,14:716,15:716,16:716,17:636,18:716,19:716,20:716,21:637,22:714,23:714,24:714,25:643,29:694,33:676,37:685,41:683,45:683,49:680,53:682,57:708,61:695,65:688,69:702,73:690,77:696,81:694,85:705,89:706,93:703,97:707 };
const ACF_BLUE = "#337ab7";
const zy = z => 620 + z / 3;
const TICKS = ["1.00", "0.75", "0.50", "0.25", "0.00", "−0.25", "−0.50", "−0.75", "−1.00"];

const Stems = ({ x0, value }) => {
  const dots = [];
  for (let lag = 0; lag <= 100; lag++) {
    const x = x0 + lag * 3.447;
    const y = zy(value(lag));
    dots.push(
      <g key={lag}>
        <line x1={x} x2={x} y1="857.5" y2={y} stroke={ACF_BLUE} strokeWidth="1.5" />
        <circle cx={x} cy={y} r={lag === 0 ? 1.6 : 2.6} fill={ACF_BLUE} />
      </g>
    );
  }
  return dots;
};

const AxisFrame = ({ title, tickRight, x0, lineFrom, lineTo, titleX }) => (
  <>
    <text x={titleX} y="713" textAnchor="middle" fontFamily="DejaVu Sans" fontSize="11.5" fill="#333">{title}</text>
    {TICKS.map((t, i) => (
      <text key={t} x={tickRight} y={722.5 + i * 34.65} textAnchor="end" fontFamily="DejaVu Sans" fontSize="9.8" fill="#333">{t}</text>
    ))}
    {[0, 20, 40, 60, 80, 100].map(v => (
      <text key={v} x={x0 + v * 3.447} y="1014" textAnchor="middle" fontFamily="DejaVu Sans" fontSize="9.8" fill="#333">{v}</text>
    ))}
    <line x1={lineFrom} x2={lineTo} y1="857.5" y2="857.5" stroke={ACF_BLUE} strokeWidth="2" />
  </>
);

const AcfCharts = () => (
  <AcfBox width="900" height="330" viewBox="1790 695 900 330">
    <AxisFrame title="ACF" tickRight={1817} x0={1844} lineFrom={1827.6} lineTo={2207} titleX={2017} />
    <path d="M1844 857.5C1852 863 1880 866 1930 869C2020 872 2120 874 2190 874.5V841C2120 841 2020 844 1930 847C1880 850 1852 852 1844 857.5Z" fill={ACF_BLUE} opacity="0.26" />
    <Stems x0={1844} value={lag => lerpAt(ACF_Z, lag)} />
    <AxisFrame title="PACF" tickRight={2273} x0={2300.9} lineFrom={2283.6} lineTo={2664} titleX={2474} />
    <Stems x0={2300.9} value={lag => PACF_Z[lag] || (lag % 2 ? 714 : 716)} />
  </AcfBox>
);

const FACTS_A = [["Distinct", "1138"], ["Distinct (%)", "7.2%"], ["Missing", "0"], ["Missing (%)", "0.0%"], ["Infinite", "0"], ["Infinite (%)", "0.0%"]];
const FACTS_B = [["Mean", "14.813392"], ["Minimum", "1.75"], ["Maximum", "37.111111"], ["Zeros", "0"], ["Zeros (%)", "0.0%"], ["Memory size", "247.6 KiB"]];
const TABS = ["Statistics", "Histogram", "Time-series", "Gap analysis", "Common values", "Extreme values", "Autocorrelation"];

const ReportPanel = () => (
  <Report>
    <Overview>
      <Facts>
        <TitleLine>
          <VarName>NO2 Mean</VarName>
          <Redaction />
        </TitleLine>
        <VarType>Numeric time series</VarType>
        <Badges>
          <Badge>NON STATIONARY</Badge>
          <Badge>SEASONAL</Badge>
        </Badges>
        <FactTables>
          <FactTable $w={344}>
            {FACTS_A.map(([l, v]) => (
              <FactRow key={l} $label={246}><FactLabel>{l}</FactLabel><FactValue>{v}</FactValue></FactRow>
            ))}
          </FactTable>
          <FactTable $w={344}>
            {FACTS_B.map(([l, v]) => (
              <FactRow key={l} $label={187}><FactLabel>{l}</FactLabel><FactValue>{v}</FactValue></FactRow>
            ))}
          </FactTable>
        </FactTables>
      </Facts>
      <TrendChart />
    </Overview>
    <ActionRow>
      <MoreButton>More details</MoreButton>
    </ActionRow>
    <Tabs>
      {TABS.map(t => (
        <Tab key={t} $active={t === "Autocorrelation"}>{t}</Tab>
      ))}
    </Tabs>
    <AcfCharts />
    <Caption>ACF and PACF</Caption>
  </Report>
);

/* ---------- diagram drawing ---------- */

// soft curve through [x, y, width] points, drawn as a filled ribbon
const ribbon = pts => {
  const at = i => pts[Math.max(0, Math.min(pts.length - 1, i))];
  const samples = [];
  for (let i = 0; i < pts.length - 1; i++) {
    for (let s = 0; s < 16; s++) {
      const t = s / 16;
      const [p0, p1, p2, p3] = [at(i - 1), at(i), at(i + 1), at(i + 2)];
      const c = k =>
        0.5 * (2 * p1[k] + (p2[k] - p0[k]) * t + (2 * p0[k] - 5 * p1[k] + 4 * p2[k] - p3[k]) * t * t + (3 * p1[k] - p0[k] - 3 * p2[k] + p3[k]) * t * t * t);
      samples.push([c(0), c(1), p1[2] + (p2[2] - p1[2]) * t]);
    }
  }
  samples.push(pts[pts.length - 1]);
  const left = [];
  const right = [];
  samples.forEach((p, i) => {
    const a = samples[Math.max(0, i - 1)];
    const b = samples[Math.min(samples.length - 1, i + 1)];
    const dx = b[0] - a[0];
    const dy = b[1] - a[1];
    const len = Math.hypot(dx, dy) || 1;
    const nx = (-dy / len) * (p[2] / 2);
    const ny = (dx / len) * (p[2] / 2);
    left.push(`${(p[0] + nx).toFixed(1)} ${(p[1] + ny).toFixed(1)}`);
    right.unshift(`${(p[0] - nx).toFixed(1)} ${(p[1] - ny).toFixed(1)}`);
  });
  return `M${left.join("L")}L${right.join("L")}Z`;
};

// hand drawn rounded box, j moves the pass a little off the first one
const sketch = (x, y, w, h, rx, ry, j = 0) => {
  const r = x + w;
  const b = y + h;
  return [
    `M${x + rx} ${y + j}`,
    `C${x + w * 0.4} ${y - j} ${x + w * 0.6} ${y + j} ${r - rx} ${y}`,
    `C${r - rx * 0.3} ${y} ${r - j} ${y + ry * 0.3} ${r} ${y + ry}`,
    `C${r + j} ${y + h * 0.4} ${r - j} ${y + h * 0.6} ${r} ${b - ry}`,
    `C${r} ${b - ry * 0.3} ${r - rx * 0.3} ${b} ${r - rx} ${b - j}`,
    `C${x + w * 0.6} ${b + j} ${x + w * 0.4} ${b - j} ${x + rx} ${b}`,
    `C${x + rx * 0.3} ${b} ${x + j} ${b - ry * 0.3} ${x} ${b - ry}`,
    `C${x - j} ${y + h * 0.6} ${x + j} ${y + h * 0.4} ${x} ${y + ry}`,
    `C${x} ${y + ry * 0.3} ${x + rx * 0.3} ${y} ${x + rx} ${y + j}Z`,
  ].join("");
};

const GRAY = "#d1d1d1";
const BLUE = "#569fe5";
const PINK = "#ff8787";
const BROWN = "#b85f00";
const GREEN = "#379a4c";

const Box = ({ x, y, w, h, rx, ry, color, weight }) => (
  <>
    <path d={sketch(x, y, w, h, rx, ry, 0)} fill="none" stroke={color} strokeWidth={weight} />
    <path d={sketch(x + 0.6, y + 0.6, w - 1, h - 1, rx, ry, 1.4)} fill="none" stroke={color} strokeWidth={weight - 1.2} />
  </>
);

const NOTES = [
  ["Mock environmental", 100, 830, 505, GREEN],
  ["data", 298, 900, 137, GREEN],
  ["user interaction", 100, 1137, 433, BLUE],
  ["- add new use case", 58, 1208, 547, BLUE],
  ["Produces output", 1580, 1231, 453, PINK],
  ["Renders output", 1467, 1650, 421, BLUE],
];

const Diagram = () => (
  <>
    <Wires width="2833" height="1687" viewBox="0 0 2833 1687">
      <Box x={928} y={737} w={283} h={216} rx={54} ry={50} color={GRAY} weight={4} />
      <Box x={928} y={1274} w={281} h={216} rx={52} ry={50} color={GRAY} weight={4} />
      <Box x={1515} y={1277} w={282} h={215} rx={50} ry={50} color={GRAY} weight={4} />
      <Box x={470} y={1245} w={770} h={298} rx={60} ry={54} color={BLUE} weight={4.6} />

      <path d="M665 846.5L921 815M665 850.5L921 817.5" stroke={GREEN} strokeWidth="3.6" fill="none" />
      <path d="M871 806L922 816L875 842" stroke={GREEN} strokeWidth="4.6" fill="none" strokeLinecap="round" strokeLinejoin="round" />

      <path d="M1011 1274L1008 950" stroke={GRAY} strokeWidth="4" fill="none" />
      <path d="M991 999L1008 950L1026 999" stroke={GRAY} strokeWidth="3" fill="none" strokeLinejoin="round" />
      <path d="M1119 954L1120 1270" stroke={GRAY} strokeWidth="4.6" fill="none" />
      <path d="M1104 1225C1108 1245 1115 1260 1120 1270C1126 1258 1135 1245 1140 1225" stroke={GRAY} strokeWidth="3" fill="none" />

      <path d={ribbon([[1239, 1091, 3], [1245, 1175, 4], [1262, 1250, 4.6], [1291, 1291, 5.8], [1357, 1322, 7], [1430, 1338, 7], [1509, 1348, 5]])} fill={BROWN} />
      <path d="M1464 1323L1511 1347L1459 1358" stroke={BROWN} strokeWidth="5.4" fill="none" strokeLinecap="round" strokeLinejoin="round" />

      <path d="M1212 1387.5H1497M1212 1391.5H1497" stroke={GRAY} strokeWidth="3.6" fill="none" />
      <path d="M1449 1373L1499 1390L1449 1410" stroke={GRAY} strokeWidth="4.4" fill="none" strokeLinecap="round" strokeLinejoin="round" />

      <path d={ribbon([[1801, 1386, 8], [1860, 1380, 9], [1913, 1371, 10], [1970, 1356, 8], [2020, 1320, 5], [2043, 1270, 4], [2062, 1190, 3.4], [2085, 1137, 3]])} fill={PINK} />
      <path d="M2056 1179L2085.5 1136L2090.5 1189" stroke={PINK} strokeWidth="3.6" fill="none" strokeLinecap="round" strokeLinejoin="round" />

      <path d={ribbon([[2367, 1131, 3.4], [2332, 1212, 3.4], [2303, 1280, 3.6], [2262, 1350, 4], [2224, 1400, 4.2], [2187, 1437, 4.8], [2129, 1474, 6], [2040, 1505, 7.2], [1946, 1521, 8], [1780, 1530, 7.4], [1614, 1534, 6.6], [1228, 1532, 5.6]])} fill={BLUE} />
      <path d="M1273 1515L1226 1532L1273 1551" stroke={BLUE} strokeWidth="4" fill="none" strokeLinecap="round" strokeLinejoin="round" />

      {NOTES.map(([text, x, y, len, color]) => (
        <Scrawl key={text} x={x} y={y} textLength={len} lengthAdjust="spacing" $color={color}>{text}</Scrawl>
      ))}
    </Wires>

    <BoxLabel $x={928} $y={824} $w={283}>Data Lake</BoxLabel>
    <BoxLabel $x={928} $y={1361} $w={281}>VisiLake</BoxLabel>
    <BoxLabel $x={1515} $y={1341} $w={282} $lh={47}>AWS<br />Processing</BoxLabel>
    <BoxLabel $x={667} $y={1007} $w={280} $lh={45}>Queries<br />1234-AI-12345</BoxLabel>
    <BoxLabel $x={1168} $y={993} $w={280} $lh={47}>Returns<br />time series data</BoxLabel>

    <UseCase>Test Usecase<br />EDA<br />TAG-1234-AI-12345<br />Mean NO2</UseCase>
  </>
);

export default function App() {
  return (
    <Canvas>
      <GlobalStyle />
      <Spreadsheet />
      <ReportPanel />
      <Diagram />
    </Canvas>
  );
}
